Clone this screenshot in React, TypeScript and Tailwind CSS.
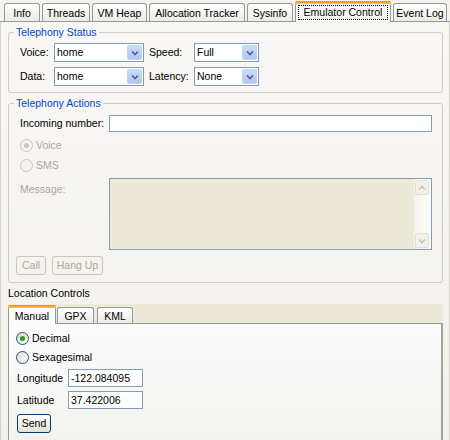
import React from "react";

const Chevron = ({ color = "#4d6185", up = false }: { color?: string; up?: boolean }) => (
  <svg width="8" height="6" viewBox="0 0 8 6">
    <path d={up ? "M1 4.5L4 1.5L7 4.5" : "M1 1.5L4 4.5L7 1.5"} stroke={color} strokeWidth="1.7" fill="none" />
  </svg>
);

const Select = ({ value, wide }: { value: string; wide: boolean }) => (
  <div className={wide ? "flex items-center h-[19px] w-[90px] border border-[#7f9db9] bg-white pl-[2px] pr-[1px]" : "flex items-center h-[19px] w-[65px] border border-[#7f9db9] bg-white pl-[2px] pr-[1px]"}>
    <span className="flex-1">{value}</span>
    <div className="w-[15px] h-[15px] rounded-[2px] bg-linear-to-b from-[#cddbfb] to-[#b2c6f5] border border-[#c3d3fb] flex items-center justify-center">
      <Chevron />
    </div>
  </div>
);

const Radio = ({ checked, disabled }: { checked: boolean; disabled: boolean }) => (
  <span className={disabled ? "w-[13px] h-[13px] rounded-full border border-[#cac8bb] bg-[#f4f3ee] flex items-center justify-center shrink-0" : "w-[13px] h-[13px] rounded-full border border-[#1c5180] bg-linear-to-br from-[#dcdad3] to-white flex items-center justify-center shrink-0"}>
    {checked && <span className={disabled ? "w-[5px] h-[5px] rounded-full bg-[#cac8bb]" : "w-[5px] h-[5px] rounded-full bg-[#21a121]"} />}
  </span>
);

const topTabs: { label: string; w: string }[] = [
  { label: "Info", w: "w-[36px]" },
  { label: "Threads", w: "w-[48px]" },
  { label: "VM Heap", w: "w-[55px]" },
  { label: "Allocation Tracker", w: "w-[96px]" },
  { label: "Sysinfo", w: "w-[46px]" },
];

export default function App() {
  return (
    <div className="w-[450px] h-[440px] overflow-hidden bg-[#f4f3ee] text-black text-[10.5px] leading-[13px] font-['Liberation_Sans',Arial,sans-serif] flex flex-col">
      {/* Top tabs */}
      <div className="flex items-end h-[22px] pl-[4px] gap-[2px] border-b border-[#919b9c] shrink-0">
        {topTabs.map((t) => (
          <div key={t.label} className={t.w + " h-[18px] flex items-center justify-center pt-[1px] border border-b-0 border-[#919b9c] rounded-t-[3px] bg-linear-to-b from-white to-[#ecebe5] whitespace-nowrap"}>
            {t.label}
          </div>
        ))}
        <div className="w-[96px] h-[21px] -mb-px relative z-10 flex flex-col border border-b-0 border-[#919b9c] rounded-t-[3px] bg-[#fbfbf9]">
          <div className="h-[3px] -mx-px -mt-px rounded-t-[3px] bg-linear-to-b from-[#e68b2c] to-[#ffc73c]" />
          <div className="flex-1 flex items-center justify-center mx-[2px] mb-[2px] mt-[1px] border border-dotted border-black whitespace-nowrap">
            Emulator Control
          </div>
        </div>
        <div className="w-[54px] h-[18px] flex items-center justify-center pt-[1px] border border-b-0 border-[#919b9c] rounded-t-[3px] bg-linear-to-b from-white to-[#ecebe5] whitespace-nowrap">
          Event Log
        </div>
      </div>

      {/* Pane */}
      <div className="flex-1 flex flex-col border-l border-r border-[#d8d6cc] bg-linear-to-b from-[#f8f7f4] to-[#f2f1ec]">
        {/* Telephony Status */}
        <fieldset className="mt-[4px] ml-[7px] mr-[6px] border border-[#d0d0bf] rounded-[3px]">
          <legend className="ml-[5px] px-[2px] text-[#0046d5] leading-[13px]">Telephony Status</legend>
          <div className="pt-[4px] pb-[6px] pl-[11px] flex flex-col gap-[5px]">
            <div className="flex items-center">
              <span className="w-[34px]">Voice:</span>
              <Select value="home" wide={true} />
              <span className="w-[50px] pl-[5px]">Speed:</span>
              <Select value="Full" wide={false} />
            </div>
            <div className="flex items-center">
              <span className="w-[34px]">Data:</span>
              <Select value="home" wide={true} />
              <span className="w-[50px] pl-[5px]">Latency:</span>
              <Select value="None" wide={false} />
            </div>
          </div>
        </fieldset>

        {/* Telephony Actions */}
        <fieldset className="mt-[4px] ml-[7px] mr-[6px] border border-[#d0d0bf] rounded-[3px]">
          <legend className="ml-[5px] px-[2px] text-[#0046d5] leading-[13px]">Telephony Actions</legend>
          <div className="pt-[5px] pb-[7px] pl-[11px] pr-[10px] flex flex-col gap-[6px]">
            <div className="flex items-center h-[17px]">
              <span className="w-[89px]">Incoming number:</span>
              <div className="flex-1 h-[17px] border border-[#7f9db9] bg-white" />
            </div>
            <div className="flex items-center h-[14px] gap-[3px] text-[#aca899]">
              <Radio checked={true} disabled={true} />
              <span>Voice</span>
            </div>
            <div className="flex items-center h-[14px] gap-[3px] text-[#aca899]">
              <Radio checked={false} disabled={true} />
              <span>SMS</span>
            </div>
            <div className="flex items-start h-[72px]">
              <span className="w-[89px] pt-[5px] text-[#aca899]">Message:</span>
              <div className="flex-1 h-[72px] flex border border-[#7f9db9] bg-[#ece9d8]">
                <div className="flex-1" />
                <div className="w-[17px] flex flex-col justify-between py-px pr-px bg-linear-to-r from-[#f3f2ed] to-[#fdfdfb]">
                  <div className="h-[15px] mx-px rounded-[2px] border border-[#e2e0d6] bg-[#f1f0eb] flex items-center justify-center">
                    <Chevron color="#c9c7ba" up={true} />
                  </div>
                  <div className="h-[15px] mx-px rounded-[2px] border border-[#e2e0d6] bg-[#f1f0eb] flex items-center justify-center">
                    <Chevron color="#c9c7ba" />
                  </div>
                </div>
              </div>
            </div>
            <div className="flex items-center gap-[6px] -ml-[4px]">
              <div className="w-[30px] h-[19px] flex items-center justify-center border border-[#c9c7ba] rounded-[3px] text-[#aca899]">Call</div>
              <div className="w-[51px] h-[19px] flex items-center justify-center border border-[#c9c7ba] rounded-[3px] text-[#aca899]">Hang Up</div>
            </div>
          </div>
        </fieldset>

        {/* Location Controls */}
        <div className="mt-[4px] ml-[7px]">Location Controls</div>
        <div className="mt-[4px] ml-[7px] mr-[6px] h-[19px] flex items-end bg-[#ece9d8] shrink-0">
          <div className="w-[48px] h-[19px] -mb-px relative z-10 flex flex-col border border-b-0 border-[#919b9c] rounded-t-[3px] bg-[#fcfcfe]">
            <div className="h-[3px] -mx-px -mt-px rounded-t-[3px] bg-linear-to-b from-[#e68b2c] to-[#ffc73c]" />
            <div className="flex-1 flex items-center justify-center">Manual</div>
          </div>
          <div className="ml-px w-[37px] h-[16px] flex items-center justify-center pt-[1px] border border-b-0 border-[#919b9c] rounded-t-[3px] bg-linear-to-b from-white to-[#ecebe5]">GPX</div>
          <div className="ml-[3px] w-[36px] h-[16px] flex items-center justify-center pt-[1px] border border-b-0 border-[#919b9c] rounded-t-[3px] bg-linear-to-b from-white to-[#ecebe5]">KML</div>
        </div>
        <div className="ml-[7px] mr-[6px] flex-1 border-t border-l border-[#919b9c] border-r-2 border-r-[#a3a29c] bg-linear-to-b from-[#fcfcfe] to-[#f4f3ee] pt-[7px] pl-[8px] flex flex-col">
          <div className="flex items-center h-[14px] gap-[3px] -ml-px">
            <Radio checked={true} disabled={false} />
            <span>Decimal</span>
          </div>
          <div className="mt-[5px] flex items-center h-[14px] gap-[3px] -ml-px">
            <Radio checked={false} disabled={false} />
            <span>Sexagesimal</span>
          </div>
          <div className="mt-[5px] flex items-center h-[18px]">
            <span className="w-[51px]">Longitude</span>
            <div className="w-[75px] h-[18px] border border-[#7f9db9] bg-white flex items-center pl-[2px]">-122.084095</div>
          </div>
          <div className="mt-[4px] flex items-center h-[18px]">
            <span className="w-[51px]">Latitude</span>
            <div className="w-[75px] h-[18px] border border-[#7f9db9] bg-white flex items-center pl-[2px]">37.422006</div>
          </div>
          <div className="mt-[5px] w-[34px] h-[19px] flex items-center justify-center border border-[#003c74] rounded-[3px] bg-linear-to-b from-white to-[#e3e0d4]">
            Send
          </div>
        </div>
      </div>
    </div>
  );
}
